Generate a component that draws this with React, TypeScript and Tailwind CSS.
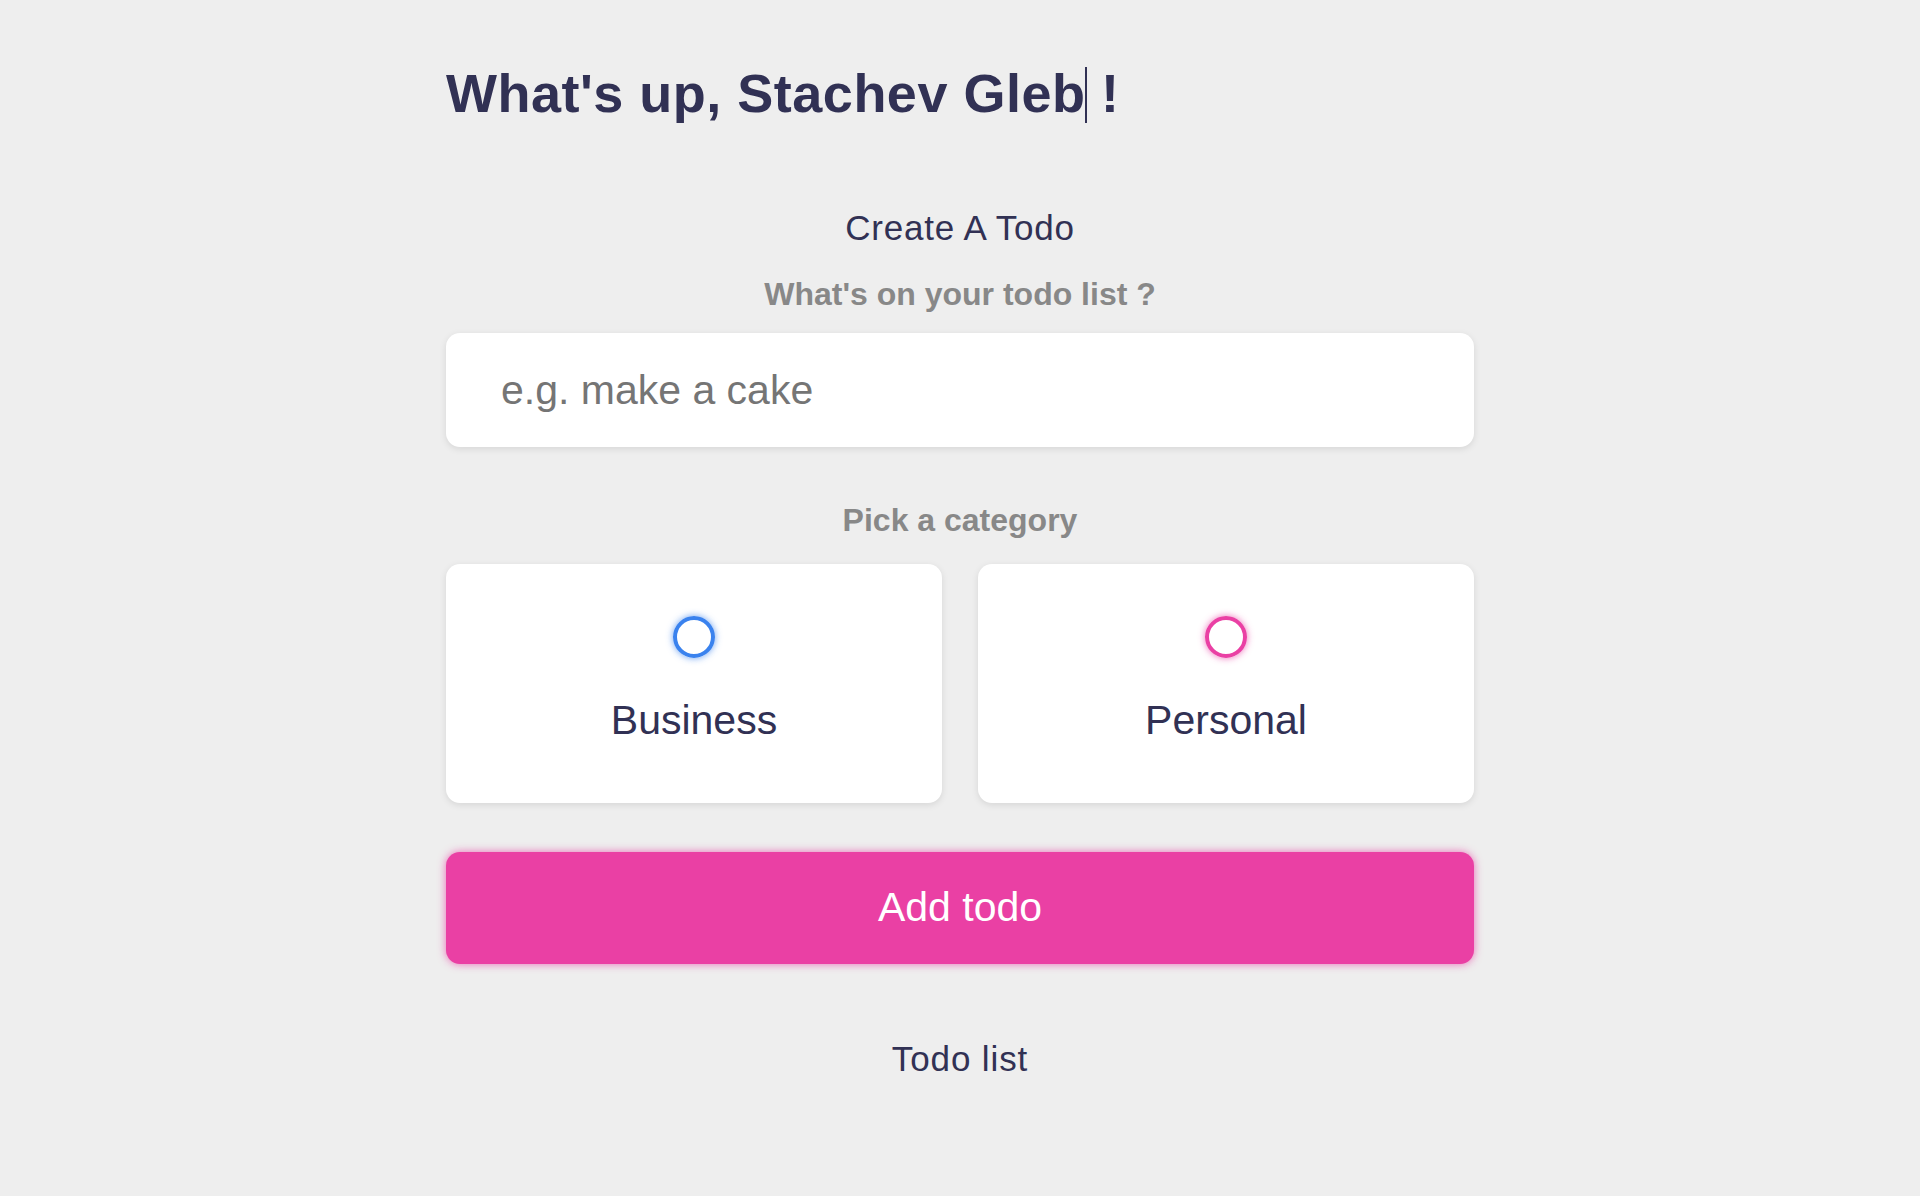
import { useState } from 'react';

const categories = [
  { id: 'business', label: 'Business', bubble: 'border-[#3A82EE] shadow-[0_0_7px_rgba(58,130,238,0.75)]' },
  { id: 'personal', label: 'Personal', bubble: 'border-[#EA40A4] shadow-[0_0_7px_rgba(234,64,164,0.75)]' },
];

export default function App() {
  const [content, setContent] = useState('');
  const [category, setCategory] = useState<string | null>(null);

  return (
    <main className="min-h-screen bg-[#eeeeee] text-[#313154] font-['Liberation_Sans',Arial,sans-serif]">
      <div className="w-[1028px] mx-auto pt-[62px]">
        {/* greeting */}
        <h2 className="text-[54px] leading-[62px] font-bold tracking-[0.5px] whitespace-nowrap">
          What's up, Stachev Gleb
          <span className="inline-block w-[1.5px] h-[56px] align-[-11px] bg-[#313154] mr-[-1.5px]"></span> !
        </h2>

        {/* create todo */}
        <section className="flex flex-col">
          <h3 className="mt-[84px] text-center text-[35px] leading-[40px] tracking-[0.8px]">Create A Todo</h3>
          <h4 className="mt-[28px] text-center text-[32px] leading-[37px] font-bold text-[#888888]">
            What's on your todo list ?
          </h4>

          <input
            type="text"
            value={content}
            onChange={(e) => setContent(e.target.value)}
            placeholder="e.g. make a cake"
            className="mt-[20px] h-[114px] w-full rounded-[14px] bg-white pl-[55px] pr-[55px] text-[41px] text-[#313154] placeholder:text-[#757575] shadow-[0_2px_7px_rgba(0,0,0,0.1)] outline-none"
          />

          <h4 className="mt-[55px] text-center text-[32px] leading-[37px] font-bold text-[#888888]">
            Pick a category
          </h4>

          <div className="mt-[25px] grid grid-cols-2 gap-[36px]">
            {categories.map((c) => (
              <label
                key={c.id}
                onClick={() => setCategory(c.id)}
                className="h-[239px] flex flex-col items-center pt-[52px] bg-white rounded-[14px] shadow-[0_2px_7px_rgba(0,0,0,0.1)] cursor-pointer"
              >
                <span
                  className={`flex items-center justify-center w-[42px] h-[42px] rounded-full border-[4px] ${c.bubble}`}
                >
                  {category === c.id && <span className="w-[24px] h-[24px] rounded-full bg-current"></span>}
                </span>
                <div className="mt-[39px] text-[41px] leading-[47px]">{c.label}</div>
              </label>
            ))}
          </div>

          <button
            type="button"
            className="mt-[49px] h-[112px] w-full rounded-[14px] bg-[#EA40A4] text-white text-[41px] shadow-[0_0_9px_rgba(234,64,164,0.75)]"
          >
            Add todo
          </button>
        </section>

        {/* list */}
        <section>
          <h3 className="mt-[75px] text-center text-[35px] leading-[40px] tracking-[0.9px]">Todo list</h3>
        </section>
      </div>
    </main>
  );
}
